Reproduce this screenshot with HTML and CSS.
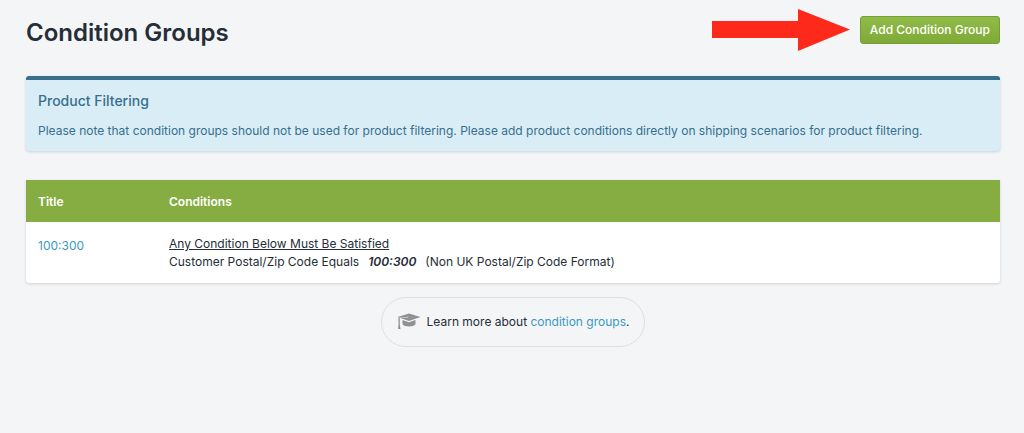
FILE: index.html
```html
<!DOCTYPE html>
<html lang="en">
<head>
<meta charset="utf-8">
<meta name="viewport" content="width=device-width, initial-scale=1">
<title>Condition Groups</title>
<link rel="stylesheet" href="styles.css">
</head>
<body>
<main class="page">
  <header class="page-header">
    <h1 class="page-title">Condition Groups</h1>
    <div class="actions">
      <svg class="arrow" width="138" height="42" viewBox="0 0 138 42" aria-hidden="true"><path fill="#fd2a1c" d="M0 12h86V0l52 20.500L86 42V29H0z"/></svg>
      <button class="button" type="button">Add Condition Group</button>
    </div>
  </header>

  <section class="notice">
    <h2 class="notice-title">Product Filtering</h2>
    <p class="notice-text">Please note that condition groups should not be used for product filtering. Please add product conditions directly on shipping scenarios for product filtering.</p>
  </section>

  <table class="groups">
    <thead>
      <tr><th class="col-title" scope="col">Title</th><th scope="col">Conditions</th></tr>
    </thead>
    <tbody>
      <tr>
        <td class="cell-title"><a class="link" href="#group">100:300</a></td>
        <td>
          <div class="rule">Any Condition Below Must Be Satisfied</div>
          <div class="condition"><span>Customer Postal/Zip Code Equals</span><em class="value">100:300</em><span>(Non UK Postal/Zip Code Format)</span></div>
        </td>
      </tr>
    </tbody>
  </table>

  <footer class="help">
    <svg class="cap" width="24" height="18" viewBox="0 0 24 18" aria-hidden="true"><g fill="#919191"><path d="M12 0.500 23.500 4 12 8 3.300 5.100 11.500 4.300 11.400 3.700 2.200 4.700 0.500 4z"/><path d="M5.500 7 12 9.200 18.500 7v4.200c-1.800 3-11.200 3-13 0z"/><path d="M1.400 4.800 2.800 5.200v6l.7 4.800H1l.6-4.800z"/></g></svg>
    <p class="help-text">Learn more about <a class="link" href="#learn">condition groups</a>.</p>
  </footer>
</main>
</body>
</html>
```
FILE: styles.css
```css
* { box-sizing: border-box; }

body {
  margin: 0;
  background: #f4f5f7;
  color: #252d37;
  font: 12px/18px Inter, "Liberation Sans", sans-serif;
}

h1, h2, p { margin: 0; }

.page {
  display: flex;
  flex-direction: column;
  padding: 9px 24px 24px 26px;
}

.page-header {
  display: flex;
  justify-content: space-between;
  align-items: center;
  margin-bottom: 25px;
}

.page-title {
  padding-top: 6px;
  font-size: 24px;
  line-height: 32px;
  font-weight: 600;
}

.actions {
  display: flex;
  align-items: center;
  gap: 10px;
}

.button {
  height: 28px;
  padding: 0 9px;
  border: 1px solid #759d31;
  border-radius: 3px;
  background: linear-gradient(#90bb48, #80aa38);
  color: #fff;
  font: inherit;
  font-weight: 500;
}

.notice {
  padding: 12px;
  border-top: 4px solid #376f8c;
  border-radius: 3px;
  background: #d9edf6;
  box-shadow: 0 1px 3px rgba(40, 70, 90, 0.2);
  color: #376f8c;
}

.notice-title {
  margin-bottom: 12px;
  font-size: 14px;
  line-height: 18px;
  font-weight: 500;
}

.notice-text { line-height: 17px; }

.groups {
  width: 100%;
  margin: 29px 0 14px;
  border-collapse: collapse;
  border-radius: 0 0 3px 3px;
  background: #fff;
  box-shadow: 0 1px 3px rgba(40, 50, 60, 0.18);
}

.groups th {
  padding: 13px 12px 11px;
  background: #86ad41;
  color: #fff;
  font-weight: 600;
  text-align: left;
}

.groups td {
  padding: 13px 12px 12px;
  vertical-align: top;
}

.groups .cell-title { padding-top: 15px; }

.col-title { width: 131px; }

.link {
  color: #3a9abf;
  text-decoration: none;
}

.rule { text-decoration: underline; }

.condition {
  display: flex;
  flex-wrap: wrap;
  column-gap: 9px;
}

.value { font-weight: 600; }

.help {
  display: flex;
  align-items: center;
  align-self: center;
  gap: 6px;
  padding: 15px;
  border: 1px solid #dddfe3;
  border-radius: 25px;
}

.cap { display: block; }
```
